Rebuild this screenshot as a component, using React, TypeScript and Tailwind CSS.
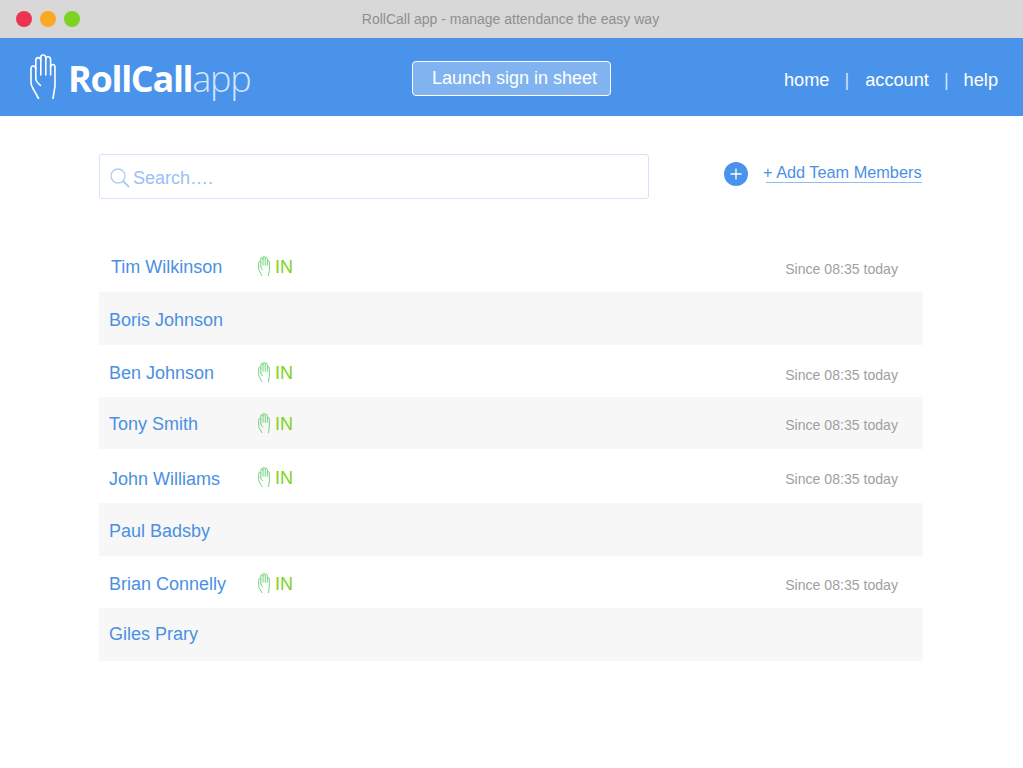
import React from "react";

function Hand({ className, strokeWidth = 1.6 }: { className: string; strokeWidth?: number }) {
  return (
    <svg viewBox="0 0 26 45" fill="none" stroke="currentColor" strokeWidth={strokeWidth} strokeLinecap="round" strokeLinejoin="round" className={className}>
      <path d="M8.5 44.5 L2.5 33.5 Q1 31.5 1 28 V15 Q1 12 3.2 12 Q5.6 12 5.8 15 V24.5" />
      <path d="M5.8 15 V6.5 Q5.8 3.6 8.2 3.6 Q10.6 3.6 10.8 6.5 V21" />
      <path d="M10.8 6.5 V3.2 Q10.8 1 13.2 1 Q15.6 1 15.8 3.5 V21" />
      <path d="M15.8 5 Q16 2.8 18 2.8 Q20.4 2.8 20.6 5.5 V21" />
      <path d="M20.6 13 Q20.8 10.5 22.8 10.5 Q25 10.5 25 13.5 V32 L23 44.5" />
      <path d="M5.8 24.5 Q5.8 27 8 29 L10.5 31.5" />
    </svg>
  );
}

const members = [
  { name: "Tim Wilkinson", in: true, h: "h-[51px]", pt: "pt-[16px]", nameCls: "ml-3 w-[146px]", sinceMt: "mt-[2px]", handMt: "-mt-[1px]", inMt: "", gray: false },
  { name: "Boris Johnson", in: false, h: "h-[53px]", pt: "pt-[18px]", nameCls: "ml-2.5 w-[148px]", sinceMt: "", handMt: "", inMt: "", gray: true },
  { name: "Ben Johnson", in: true, h: "h-[52px]", pt: "pt-[18px]", nameCls: "ml-2.5 w-[148px]", sinceMt: "mt-[2px]", handMt: "-mt-[1px]", inMt: "", gray: false },
  { name: "Tony Smith", in: true, h: "h-[52px]", pt: "pt-[17px]", nameCls: "ml-2.5 w-[148px]", sinceMt: "mt-[1px]", handMt: "-mt-[1px]", inMt: "", gray: true },
  { name: "John Williams", in: true, h: "h-[54px]", pt: "pt-[20px]", nameCls: "ml-2.5 w-[148px]", sinceMt: "mt-0", handMt: "-mt-[2px]", inMt: "-mt-[1px]", gray: false },
  { name: "Paul Badsby", in: false, h: "h-[53px]", pt: "pt-[18px]", nameCls: "ml-2.5 w-[148px]", sinceMt: "", handMt: "", inMt: "", gray: true },
  { name: "Brian Connelly", in: true, h: "h-[52px]", pt: "pt-[18px]", nameCls: "ml-2.5 w-[148px]", sinceMt: "mt-[1px]", handMt: "-mt-[1px]", inMt: "", gray: false },
  { name: "Giles Prary", in: false, h: "h-[53px]", pt: "pt-[16px]", nameCls: "ml-2.5 w-[148px]", sinceMt: "", handMt: "", inMt: "", gray: true },
];

export default function App() {
  return (
    <div className="w-[1023px] h-[768px] bg-white overflow-hidden font-['Liberation_Sans',Arial,sans-serif]">
      <div className="h-[38px] bg-[#d8d8d8] flex items-center relative pl-4">
        <div className="flex gap-2">
          <span className="w-4 h-4 rounded-full bg-[#ec3350]" />
          <span className="w-4 h-4 rounded-full bg-[#fba923]" />
          <span className="w-4 h-4 rounded-full bg-[#7ed321]" />
        </div>
        <div className="flex-1 text-center text-[14px] text-[#8f8f8f] pr-[82px]">RollCall app - manage attendance the easy way</div>
      </div>

      <div className="h-[78px] bg-[#4a93eb] flex items-center pl-[30px] pr-[25px] text-white">
        <div className="w-[382px] flex items-center">
          <Hand className="w-[26px] h-[45px] text-white -mt-[1px]" />
          <div className="ml-[12px] mt-[4px] flex items-baseline font-['Open_Sans',sans-serif] text-[36px] leading-none tracking-[-1.3px]">
            <span className="font-bold">RollCall</span>
            <span className="font-light text-[#d5e5fa]">app</span>
          </div>
        </div>
        <button className="w-[199px] h-[35px] mt-[3px] rounded-[4px] border border-white bg-[#81b3f0] text-[18px] text-left pl-[19px] text-white">
          Launch sign in sheet
        </button>
        <nav className="ml-auto flex items-center text-[18.2px] mt-[8px]">
          <span>home</span>
          <span className="ml-[15px] mr-[16px] text-[#d5e5fa]">|</span>
          <span>account</span>
          <span className="mx-[15px] text-[#d5e5fa]">|</span>
          <span>help</span>
        </nav>
      </div>

      <div className="pl-[99px] pr-[100px]">
        <div className="flex items-start pt-[38px] h-[125px]">
          <div className="w-[550px] h-[45px] border border-[#d3e4fa] rounded-[3px] flex items-center pl-[10px] bg-white">
            <svg viewBox="0 0 20 20" fill="none" stroke="#a9cdf7" strokeWidth="1.3" className="w-[20px] h-[20px] mt-[2px]">
              <circle cx="8" cy="8" r="7" />
              <path d="M13 13 L19 19" strokeWidth="2" />
            </svg>
            <span className="ml-[3px] pt-1 text-[18px] text-[#97c1f5]">Search….</span>
          </div>
          <div className="ml-[75px] mt-[8px] w-[24px] h-[24px] rounded-full bg-[#4a93eb] flex items-center justify-center">
            <svg viewBox="0 0 12 12" stroke="white" strokeWidth="1.3" className="w-3 h-3">
              <path d="M6 0.5 V11.5 M0.5 6 H11.5" />
            </svg>
          </div>
          <div className="ml-[15px] w-[159px] text-[16.3px] text-[#4a90e2] leading-none pt-[10px] h-[29px] relative whitespace-nowrap">
            + Add Team Members
            <span className="absolute left-[3px] right-0 top-[28px] h-px bg-[#8fbcf2]" />
          </div>
        </div>

        {members.map((m) => (
          <div key={m.name} className={`${m.h} ${m.pt} ${m.gray ? "bg-[#f7f7f7]" : "bg-white"} flex items-start`}>
            <div className={`${m.nameCls} text-[18px] leading-[21px] text-[#4a90e2] whitespace-nowrap`}>{m.name}</div>
            {m.in && (
              <>
                <Hand className={`w-[14px] h-[20px] text-[#72d27c] ${m.handMt}`} strokeWidth={2.2} />
                <span className={`ml-1 ${m.inMt} text-[18px] leading-[21px] text-[#7ed321]`}>IN</span>
                <span className={`ml-auto mr-[25px] ${m.sinceMt} text-[14.1px] leading-[20px] text-[#a0a0a0]`}>Since 08:35 today</span>
              </>
            )}
          </div>
        ))}
      </div>
    </div>
  );
}
